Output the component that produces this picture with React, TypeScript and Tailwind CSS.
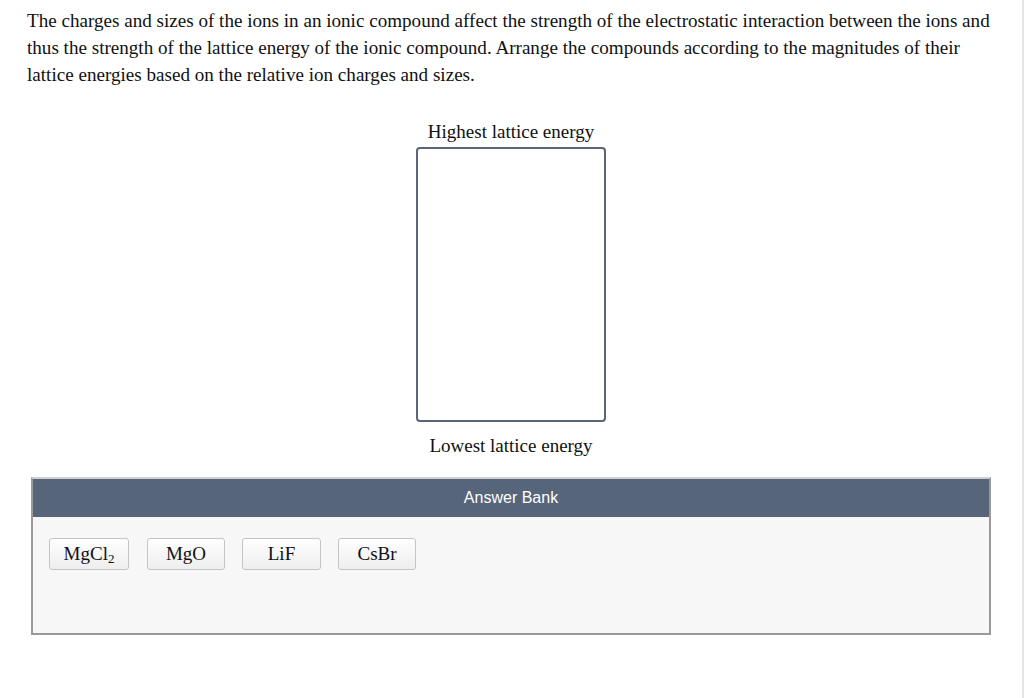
import React from "react";

const serif = { fontFamily: '"Liberation Serif", "Times New Roman", serif' };

function Chip({ children, width }: { children: React.ReactNode; width: string }) {
  return (
    <div
      className={`${width} flex h-[32px] shrink-0 items-center justify-center rounded-[3px] border border-[#c4c4c4] bg-gradient-to-b from-white to-[#eeeeee] text-[19px] text-[#111]`}
      style={serif}
    >
      {children}
    </div>
  );
}

export default function App() {
  return (
    <div className="min-h-[698px] w-[1024px] bg-white">
      <div className="min-h-[698px] border-r-2 border-[#e6e6e6] px-[27px] pt-[7px]">
        <p className="text-[19.1px] leading-[27px] text-[#111]" style={serif}>
          The charges and sizes of the ions in an ionic compound affect the strength of the electrostatic interaction between the ions and
          thus the strength of the lattice energy of the ionic compound. Arrange the compounds according to the magnitudes of their
          lattice energies based on the relative ion charges and sizes.
        </p>

        <div className="flex flex-col items-center" style={serif}>
          <div className="mt-[32px] text-[19px] leading-[24px] text-[#111]">Highest lattice energy</div>
          <div className="mt-[3px] h-[275px] w-[190px] rounded-[4px] border-2 border-[#5a6578] bg-white" />
          <div className="mt-[12px] text-[19px] leading-[24px] text-[#111]">Lowest lattice energy</div>
        </div>

        <div className="mt-[19px] ml-[4px] w-[960px] border-2 border-[#9a9a9a] border-t-[#cfcfcf]">
          <div
            className="flex h-[38px] items-center justify-center bg-[#56657a] text-[16px] text-white"
            style={{ fontFamily: '"Liberation Sans", Arial, sans-serif' }}
          >
            Answer Bank
          </div>
          <div className="flex h-[116px] items-start bg-[#f7f7f7] pl-[16px] pt-[21px]">
            <Chip width="w-[80px]">
              MgCl<span className="relative top-[5px] text-[13px]">2</span>
            </Chip>
            <div className="ml-[18px]">
              <Chip width="w-[78px]">MgO</Chip>
            </div>
            <div className="ml-[17px]">
              <Chip width="w-[79px]">LiF</Chip>
            </div>
            <div className="ml-[17px]">
              <Chip width="w-[78px]">CsBr</Chip>
            </div>
          </div>
        </div>
      </div>
    </div>
  );
}
